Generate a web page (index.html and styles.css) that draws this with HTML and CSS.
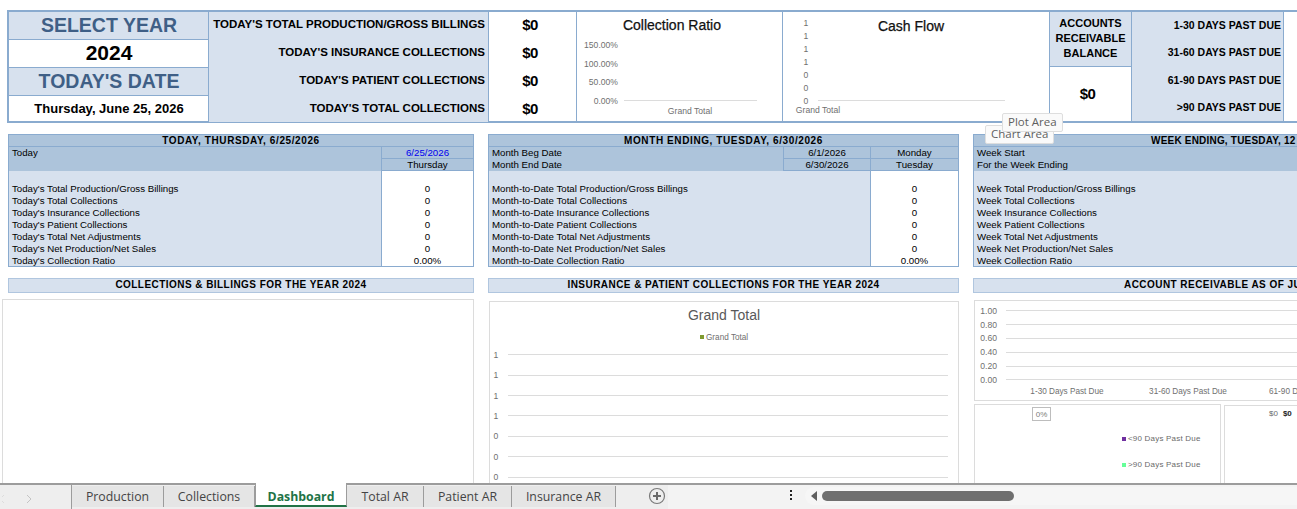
FILE: index.html
```html
<!DOCTYPE html>
<html lang="en">
<head>
  <meta charset="UTF-8">
  <meta name="viewport" content="width=device-width, initial-scale=1.0">
  <title>Dashboard</title>
  <link rel="stylesheet" href="styles.css">
</head>
<body>
  <div class="sheet">
    <!-- top strip -->
    <div class="strip">
      <div class="picker">
        <div class="picker-title">SELECT YEAR</div>
        <div class="picker-year">2024</div>
        <div class="picker-title">TODAY'S DATE</div>
        <div class="picker-date">Thursday, June 25, 2026</div>
      </div>
      <div class="totals">
        <div class="total-label">TODAY'S TOTAL PRODUCTION/GROSS BILLINGS</div><div class="total-value">$0</div>
        <div class="total-label">TODAY'S INSURANCE COLLECTIONS</div><div class="total-value">$0</div>
        <div class="total-label">TODAY'S PATIENT COLLECTIONS</div><div class="total-value">$0</div>
        <div class="total-label">TODAY'S TOTAL COLLECTIONS</div><div class="total-value">$0</div>
      </div>
      <div class="mini-chart ratio-chart">
        <svg width="205" height="110" viewBox="0 0 205 110">
          <text class="mini-title" x="95" y="18" text-anchor="middle">Collection Ratio</text>
          <text class="axis-num" x="41" y="36" text-anchor="end">150.00%</text>
          <text class="axis-num" x="41" y="55" text-anchor="end">100.00%</text>
          <text class="axis-num" x="41" y="73" text-anchor="end">50.00%</text>
          <text class="axis-num" x="41" y="92" text-anchor="end">0.00%</text>
          <line class="grid-line" x1="47" y1="88.5" x2="180" y2="88.5"/>
          <text class="axis-num" x="113" y="102" text-anchor="middle">Grand Total</text>
        </svg>
      </div>
      <div class="mini-chart flow-chart">
        <svg width="266" height="110" viewBox="0 0 266 110">
          <text class="mini-title" x="128" y="19" text-anchor="middle">Cash Flow</text>
          <text class="axis-num" x="23" y="14" text-anchor="middle">1</text>
          <text class="axis-num" x="23" y="27" text-anchor="middle">1</text>
          <text class="axis-num" x="23" y="40" text-anchor="middle">1</text>
          <text class="axis-num" x="23" y="53" text-anchor="middle">1</text>
          <text class="axis-num" x="23" y="66" text-anchor="middle">0</text>
          <text class="axis-num" x="23" y="79" text-anchor="middle">0</text>
          <text class="axis-num" x="23" y="92" text-anchor="middle">0</text>
          <line class="grid-line" x1="35" y1="88.5" x2="222" y2="88.5"/>
          <text class="axis-num" x="35" y="101" text-anchor="middle">Grand Total</text>
        </svg>
      </div>
      <div class="balance">
        <div class="balance-title">ACCOUNTS<br>RECEIVABLE<br>BALANCE</div>
        <div class="balance-value">$0</div>
      </div>
      <div class="aging">
        <div>1-30 DAYS PAST DUE</div>
        <div>31-60 DAYS PAST DUE</div>
        <div>61-90 DAYS PAST DUE</div>
        <div>&gt;90 DAYS PAST DUE</div>
      </div>
      <div class="strip-rest"></div>
    </div>

    <!-- period tables -->
    <div class="panels">
      <table class="period period-today">
        <colgroup><col><col class="col-today"></colgroup>
        <tr><th class="period-title" colspan="2">TODAY, THURSDAY, 6/25/2026</th></tr>
        <tr><td class="head-cell" rowspan="2">Today</td><td class="head-value link-date">6/25/2026</td></tr>
        <tr><td class="head-value">Thursday</td></tr>
        <tr><td class="line-cell">&nbsp;</td><td class="num-cell">&nbsp;</td></tr>
        <tr><td class="line-cell">Today's Total Production/Gross Billings</td><td class="num-cell">0</td></tr>
        <tr><td class="line-cell">Today's Total Collections</td><td class="num-cell">0</td></tr>
        <tr><td class="line-cell">Today's Insurance Collections</td><td class="num-cell">0</td></tr>
        <tr><td class="line-cell">Today's Patient Collections</td><td class="num-cell">0</td></tr>
        <tr><td class="line-cell">Today's Total Net Adjustments</td><td class="num-cell">0</td></tr>
        <tr><td class="line-cell">Today's Net Production/Net Sales</td><td class="num-cell">0</td></tr>
        <tr><td class="line-cell">Today's Collection Ratio</td><td class="num-cell">0.00%</td></tr>
      </table>

      <table class="period period-month">
        <colgroup><col><col class="col-month-date"><col class="col-month-day"></colgroup>
        <tr><th class="period-title" colspan="3">MONTH ENDING, TUESDAY, 6/30/2026</th></tr>
        <tr><td class="head-cell">Month Beg Date</td><td class="head-value">6/1/2026</td><td class="head-value">Monday</td></tr>
        <tr><td class="head-cell">Month End Date</td><td class="head-value">6/30/2026</td><td class="head-value">Tuesday</td></tr>
        <tr><td class="line-cell" colspan="2">&nbsp;</td><td class="num-cell">&nbsp;</td></tr>
        <tr><td class="line-cell" colspan="2">Month-to-Date Total Production/Gross Billings</td><td class="num-cell">0</td></tr>
        <tr><td class="line-cell" colspan="2">Month-to-Date Total Collections</td><td class="num-cell">0</td></tr>
        <tr><td class="line-cell" colspan="2">Month-to-Date Insurance Collections</td><td class="num-cell">0</td></tr>
        <tr><td class="line-cell" colspan="2">Month-to-Date Patient Collections</td><td class="num-cell">0</td></tr>
        <tr><td class="line-cell" colspan="2">Month-to-Date Total Net Adjustments</td><td class="num-cell">0</td></tr>
        <tr><td class="line-cell" colspan="2">Month-to-Date Net Production/Net Sales</td><td class="num-cell">0</td></tr>
        <tr><td class="line-cell" colspan="2">Month-to-Date Collection Ratio</td><td class="num-cell">0.00%</td></tr>
      </table>

      <table class="period period-week">
        <tr><th class="period-title week-title">WEEK ENDING, TUESDAY, 12</th></tr>
        <tr><td class="head-cell">Week Start</td></tr>
        <tr><td class="head-cell">For the Week Ending</td></tr>
        <tr><td class="line-cell">&nbsp;</td></tr>
        <tr><td class="line-cell">Week Total Production/Gross Billings</td></tr>
        <tr><td class="line-cell">Week Total Collections</td></tr>
        <tr><td class="line-cell">Week Insurance Collections</td></tr>
        <tr><td class="line-cell">Week Patient Collections</td></tr>
        <tr><td class="line-cell">Week Total Net Adjustments</td></tr>
        <tr><td class="line-cell">Week Net Production/Net Sales</td></tr>
        <tr><td class="line-cell">Week Collection Ratio</td></tr>
      </table>
    </div>

    <!-- chart sections -->
    <div class="sections">
      <section class="section section-left">
        <h2 class="section-title">COLLECTIONS &amp; BILLINGS FOR THE YEAR 2024</h2>
        <div class="chart-box chart-empty"></div>
      </section>

      <section class="section section-mid">
        <h2 class="section-title">INSURANCE &amp; PATIENT COLLECTIONS FOR THE YEAR 2024</h2>
        <div class="chart-box chart-total">
          <svg width="469" height="190" viewBox="0 1 469 190">
            <text class="big-title" x="234" y="19" text-anchor="middle">Grand Total</text>
            <rect x="210" y="34" width="4" height="4" fill="#7f9a2e"/>
            <text class="axis" x="216" y="39">Grand Total</text>
            <text class="axis-num" x="6" y="57" text-anchor="middle">1</text>
            <text class="axis-num" x="6" y="77" text-anchor="middle">1</text>
            <text class="axis-num" x="6" y="98" text-anchor="middle">1</text>
            <text class="axis-num" x="6" y="118" text-anchor="middle">1</text>
            <text class="axis-num" x="6" y="138" text-anchor="middle">0</text>
            <text class="axis-num" x="6" y="159" text-anchor="middle">0</text>
            <text class="axis-num" x="6" y="179" text-anchor="middle">0</text>
            <line class="grid-line" x1="18" y1="53.5" x2="458" y2="53.5"/>
            <line class="grid-line" x1="18" y1="74.5" x2="458" y2="74.5"/>
            <line class="grid-line" x1="18" y1="94.5" x2="458" y2="94.5"/>
            <line class="grid-line" x1="18" y1="114.5" x2="458" y2="114.5"/>
            <line class="grid-line" x1="18" y1="135.5" x2="458" y2="135.5"/>
            <line class="grid-line" x1="18" y1="155.5" x2="458" y2="155.5"/>
            <line class="grid-line" x1="18" y1="176.5" x2="458" y2="176.5"/>
          </svg>
        </div>
      </section>

      <section class="section section-right">
        <h2 class="section-title ar-title">ACCOUNT RECEIVABLE AS OF JU</h2>
        <div class="chart-box chart-ar">
          <svg width="330" height="98" viewBox="0 0 330 98">
            <text class="axis-num" x="22" y="13" text-anchor="end">1.00</text>
            <text class="axis-num" x="22" y="27" text-anchor="end">0.80</text>
            <text class="axis-num" x="22" y="40" text-anchor="end">0.60</text>
            <text class="axis-num" x="22" y="54" text-anchor="end">0.40</text>
            <text class="axis-num" x="22" y="68" text-anchor="end">0.20</text>
            <text class="axis-num" x="22" y="82" text-anchor="end">0.00</text>
            <line class="grid-line" x1="31" y1="9.5" x2="330" y2="9.5"/>
            <line class="grid-line" x1="31" y1="23.5" x2="330" y2="23.5"/>
            <line class="grid-line" x1="31" y1="37.5" x2="330" y2="37.5"/>
            <line class="grid-line" x1="31" y1="51.5" x2="330" y2="51.5"/>
            <line class="grid-line" x1="31" y1="65.5" x2="330" y2="65.5"/>
            <line class="grid-line" x1="31" y1="78.5" x2="330" y2="78.5"/>
            <text class="axis" x="92" y="93" text-anchor="middle">1-30 Days Past Due</text>
            <text class="axis" x="213" y="93" text-anchor="middle">31-60 Days Past Due</text>
            <text class="axis" x="294" y="93">61-90 D</text>
          </svg>
        </div>
        <div class="chart-pair">
          <div class="chart-box chart-pie">
            <span class="pie-label">0%</span>
            <div class="pie-legend">
              <div class="legend-row"><i class="swatch swatch-purple"></i>&lt;90 Days Past Due</div>
              <div class="legend-row"><i class="swatch swatch-green"></i>&gt;90 Days Past Due</div>
            </div>
          </div>
          <div class="chart-box chart-bars">
            <span class="bar-label">$0</span><span class="bar-label bar-label-bold">$0</span>
          </div>
        </div>
      </section>
    </div>

    <!-- hover labels from Excel -->
    <div class="hover-tip tip-chart">Chart Area</div>
    <div class="hover-tip tip-plot">Plot Area</div>
  </div>

  <!-- sheet tabs -->
  <div class="tabbar">
    <div class="tab-nav">
      <svg width="40" height="10" viewBox="0 0 40 10"><path d="M2 1l-4 4 4 4" fill="none" stroke="#dcdcdc"/><path d="M25 1l4 4-4 4" fill="none" stroke="#c4c4c4"/></svg>
    </div>
    <div class="tab tab-production">Production</div>
    <div class="tab tab-collections">Collections</div>
    <div class="tab tab-active">Dashboard</div>
    <div class="tab tab-total">Total AR</div>
    <div class="tab tab-patient">Patient AR</div>
    <div class="tab tab-insurance">Insurance AR</div>
    <div class="tab-add">
      <svg width="18" height="18" viewBox="0 0 18 18"><circle cx="9" cy="9" r="7.5" fill="none" stroke="#7a7a7a" stroke-width="1.2"/><path d="M9 5v8M5 9h8" stroke="#6a6a6a" stroke-width="2"/></svg>
    </div>
    <div class="tab-rest">
      <div class="tab-dots"><i></i><i></i><i></i></div>
      <div class="scroll-track">
        <svg width="6" height="10" viewBox="0 0 6 10"><path d="M6 0v10L0 5z" fill="#5f5f5f"/></svg>
        <div class="scroll-thumb"></div>
      </div>
    </div>
  </div>
</body>
</html>
```

FILE: styles.css
```css
* {
  box-sizing: border-box;
}

html, body {
  margin: 0;
  height: 100%;
  overflow: hidden;
  background: #fff;
  font-family: "Liberation Sans", Arial, sans-serif;
}

body {
  display: flex;
  flex-direction: column;
  height: 509px;
}

.sheet {
  position: relative;
  flex: 1;
  min-height: 0;
  overflow: hidden;
  padding: 10px 0 0 7px;
}

/* top strip */
.strip {
  display: flex;
  width: 1400px;
  height: 113px;
  border-top: 2px solid #8aabcf;
  border-bottom: 2px solid #8aabcf;
  border-left: 2px solid #8aabcf;
}

.picker {
  display: grid;
  grid-template-rows: 28px 28px 28px 1fr;
  width: 200px;
  flex: none;
  padding-left: 1px;
  border-right: 1px solid #8aabcf;
  text-align: center;
}

.picker-title {
  margin-left: -1px;
  padding-left: 1px;
  background: #d7e1ee;
  color: #3f5f86;
  font-size: 19.5px;
  font-weight: bold;
  line-height: 26px;
  border-bottom: 1px solid #8aabcf;
}

.picker-year {
  margin-left: -1px;
  padding-left: 1px;
  font-size: 21px;
  font-weight: bold;
  line-height: 26px;
  border-bottom: 1px solid #8aabcf;
}

.picker-date {
  font-size: 13px;
  font-weight: bold;
  line-height: 26px;
}

.totals {
  display: grid;
  grid-template-columns: 280px 88px;
  grid-template-rows: 28px 28px 28px 1fr;
  flex: none;
}

.total-label {
  background: #d7e1ee;
  border-right: 1px solid #8aabcf;
  padding-right: 3px;
  text-align: right;
  font-size: 11.5px;
  font-weight: bold;
  line-height: 24px;
}

.total-value {
  border-right: 1px solid #8aabcf;
  text-align: center;
  font-size: 15px;
  font-weight: bold;
  letter-spacing: -0.5px;
  line-height: 26px;
  padding-right: 5px;
}

.mini-chart {
  flex: none;
  border-right: 1px solid #8aabcf;
}

.mini-chart svg {
  display: block;
}

.ratio-chart {
  width: 206px;
}

.flow-chart {
  width: 267px;
}

.balance {
  width: 82px;
  flex: none;
  display: flex;
  flex-direction: column;
  border-right: 1px solid #8aabcf;
  text-align: center;
}

.balance-title {
  height: 56px;
  padding-top: 4px;
  background: #d7e1ee;
  border-bottom: 1px solid #8aabcf;
  font-size: 11px;
  font-weight: bold;
  line-height: 15px;
}

.balance-value {
  flex: 1;
  padding-right: 6px;
  font-size: 15px;
  font-weight: bold;
  letter-spacing: -0.5px;
  line-height: 54px;
}

.aging {
  width: 152px;
  flex: none;
  display: grid;
  grid-auto-rows: 1fr;
  background: #d7e1ee;
  border-right: 1px solid #8aabcf;
  padding-right: 2px;
  text-align: right;
  font-size: 10.5px;
  font-weight: bold;
  line-height: 26px;
}

.strip-rest {
  flex: 1;
}

/* chart text */
.mini-title {
  font-size: 14px;
  fill: #111;
  stroke: #111;
  stroke-width: 0.25;
}

.big-title {
  font-size: 14px;
  fill: #595959;
}

.axis {
  font-size: 8.2px;
  fill: #6f6f6f;
}

.axis-num {
  font-size: 8.6px;
  fill: #6f6f6f;
}

.grid-line {
  stroke: #dcdcdc;
  stroke-width: 1;
}

/* period tables */
.panels {
  display: flex;
  align-items: flex-start;
  gap: 14px;
  width: 1600px;
  margin-top: 11px;
  padding-left: 1px;
}

.period {
  flex: none;
  table-layout: fixed;
  border-collapse: collapse;
  border: 1px solid #8aabcf;
  font-size: 9.7px;
  line-height: 11px;
}

.period td, .period th {
  height: 12px;
  padding: 0;
  white-space: nowrap;
  overflow: hidden;
}

.period-today {
  width: 466px;
}

.period-month {
  width: 471px;
}

.period-week {
  width: 564px;
}

.col-today {
  width: 92px;
}

.col-month-date {
  width: 87px;
}

.col-month-day {
  width: 88px;
}

.period-title {
  background: #adc4db;
  border-bottom: 1px solid #8aabcf;
  font-size: 10px;
  font-weight: bold;
  letter-spacing: 0.6px;
  text-align: center;
}

.period .week-title {
  letter-spacing: 0.2px;
  text-align: left;
  padding-left: 177px;
}

.period .head-cell {
  background: #adc4db;
  padding-left: 3px;
  vertical-align: top;
}

.head-value {
  background: #adc4db;
  border-left: 1px solid #8aabcf;
  border-bottom: 1px solid #8aabcf;
  text-align: center;
}

.link-date {
  color: #0000ee;
}

.period .line-cell {
  background: #d7e1ee;
  padding-left: 3px;
}

.num-cell {
  background: #fff;
  border-left: 1px solid #8aabcf;
  text-align: center;
}

/* chart sections */
.sections {
  display: flex;
  gap: 14px;
  width: 1600px;
  margin-top: 11px;
  padding-left: 1px;
}

.section {
  flex: none;
}

.section-left {
  width: 466px;
}

.section-mid {
  width: 471px;
}

.section-right {
  width: 564px;
}

.section-title {
  height: 15px;
  margin: 0;
  background: #d7e1ee;
  border: 1px solid #b0c6df;
  font-size: 10px;
  font-weight: bold;
  letter-spacing: 0.45px;
  line-height: 12px;
  text-align: center;
}

.ar-title {
  text-align: left;
  padding-left: 150px;
}

.chart-box {
  background: #fff;
  border: 1px solid #dcdcdc;
}

.chart-box svg {
  display: block;
}

.chart-empty {
  height: 200px;
  margin: 6px 0 0 -6px;
}

.chart-total {
  height: 200px;
  margin: 8px 0 0 1px;
}

.chart-ar {
  height: 101px;
  margin-top: 7px;
  margin-left: 1px;
}

.chart-pair {
  display: flex;
  gap: 3px;
  margin: 3px 0 0 1px;
}

.chart-pie {
  position: relative;
  width: 247px;
  height: 90px;
}

.pie-label {
  position: absolute;
  left: 57px;
  top: 2px;
  width: 19px;
  height: 14px;
  border: 1px solid #bdbdbd;
  color: #7c7c7c;
  font-size: 8px;
  line-height: 13px;
  text-align: center;
}

.pie-legend {
  position: absolute;
  left: 147px;
  top: 29px;
  display: flex;
  flex-direction: column;
  gap: 16px;
}

.legend-row {
  display: flex;
  align-items: center;
  gap: 2px;
  font-size: 8px;
  line-height: 10px;
  color: #6a6a6a;
  letter-spacing: 0.2px;
}

.swatch {
  width: 4px;
  height: 4px;
}

.swatch-purple {
  background: #7030a0;
}

.swatch-green {
  background: #66ff99;
}

.chart-bars {
  width: 200px;
  height: 90px;
  margin-top: 1px;
  padding: 3px 0 0 44px;
  font-size: 8px;
  line-height: 10px;
  white-space: nowrap;
}

.bar-label {
  color: #6a6a6a;
}

.bar-label-bold {
  margin-left: 5px;
  color: #222;
  font-weight: bold;
}

/* Excel hover labels */
.hover-tip {
  position: absolute;
  height: 19px;
  padding: 0 5px;
  background: #fafafa;
  border: 1px solid #dedede;
  border-radius: 2px;
  color: #5f5f5f;
  font-family: "Open Sans", sans-serif;
  font-size: 11.5px;
  line-height: 15px;
  white-space: nowrap;
}

.tip-chart {
  left: 985px;
  top: 125px;
  width: 69px;
}

.tip-plot {
  left: 1002px;
  top: 113px;
  width: 61px;
}

/* sheet tabs */
.tabbar {
  flex: none;
  display: flex;
  height: 26px;
  background: #eeeeee;
  border-top: 2px solid #9c9c9c;
  font-family: "Open Sans", sans-serif;
  font-size: 12.3px;
  color: #444;
}

.tab-nav {
  width: 72px;
  padding: 6px 0 0 2px;
  border-right: 1px solid #9c9c9c;
}

.tab {
  height: 21px;
  margin-top: 1px;
  background: #e5e5e5;
  border-right: 1px solid #9c9c9c;
  line-height: 21px;
  text-align: center;
}

.tab-production {
  width: 92px;
}

.tab-collections {
  width: 91px;
}

.tab.tab-active {
  width: 92px;
  height: 24px;
  margin-top: -2px;
  background: #fff;
  border-left: 1px solid #9c9c9c;
  border-right: 1px solid #9c9c9c;
  border-bottom: 2px solid #217346;
  color: #217346;
  font-weight: bold;
  line-height: 27px;
}

.tab-total {
  width: 77px;
}

.tab-patient {
  width: 88px;
}

.tab-insurance {
  width: 104px;
}

.tab-add {
  width: 52px;
  padding: 2px 0 0 32px;
}

.tab-rest {
  flex: 1;
  display: flex;
  align-items: flex-start;
  background: #f3f3f3;
  padding-top: 2px;
}

.tab-dots {
  display: flex;
  flex-direction: column;
  gap: 2px;
  margin: 3px 0 0 122px;
}

.tab-dots i {
  width: 2px;
  height: 2px;
  background: #222;
}

.scroll-track {
  display: flex;
  align-items: center;
  gap: 5px;
  flex: 1;
  height: 18px;
  margin-left: 13px;
  padding-left: 6px;
  background: #f6f6f6;
  border-radius: 9px 0 0 9px;
}

.scroll-thumb {
  width: 192px;
  height: 10px;
  background: #6f6f6f;
  border-radius: 5px;
}
```
